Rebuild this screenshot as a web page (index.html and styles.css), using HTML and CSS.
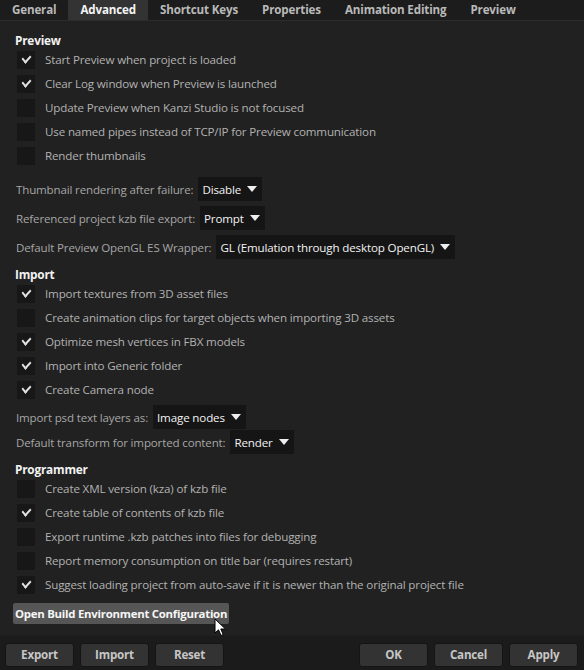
FILE: index.html
```html
<!DOCTYPE html>
<html>
<head>
<meta charset="utf-8">
<link rel="stylesheet" href="styles.css">
</head>
<body>
<div class="win">
  <div class="tabs">
    <div class="tab">General</div>
    <div class="tab active">Advanced</div>
    <div class="tab">Shortcut Keys</div>
    <div class="tab">Properties</div>
    <div class="tab">Animation Editing</div>
    <div class="tab">Preview</div>
  </div>
  <div class="content">
    <div class="head h-preview">Preview</div>
    <div class="check on"><span class="box"></span>Start Preview when project is loaded</div>
    <div class="check on"><span class="box"></span>Clear Log window when Preview is launched</div>
    <div class="check"><span class="box"></span>Update Preview when Kanzi Studio is not focused</div>
    <div class="check"><span class="box"></span>Use named pipes instead of TCP/IP for Preview communication</div>
    <div class="check"><span class="box"></span>Render thumbnails</div>

    <div class="drops g1">
      <div class="drow"><span class="lbl">Thumbnail rendering after failure:</span><span class="drop">Disable<span class="tri"></span></span></div>
      <div class="drow"><span class="lbl">Referenced project kzb file export:</span><span class="drop">Prompt<span class="tri"></span></span></div>
      <div class="drow"><span class="lbl">Default Preview OpenGL ES Wrapper:</span><span class="drop">GL (Emulation through desktop OpenGL)<span class="tri"></span></span></div>
    </div>

    <div class="head h-import">Import</div>
    <div class="check on"><span class="box"></span>Import textures from 3D asset files</div>
    <div class="check"><span class="box"></span>Create animation clips for target objects when importing 3D assets</div>
    <div class="check on"><span class="box"></span>Optimize mesh vertices in FBX models</div>
    <div class="check on"><span class="box"></span>Import into Generic folder</div>
    <div class="check on"><span class="box"></span>Create Camera node</div>

    <div class="drops g2">
      <div class="drow"><span class="lbl">Import psd text layers as:</span><span class="drop">Image nodes<span class="tri"></span></span></div>
      <div class="drow"><span class="lbl">Default transform for imported content:</span><span class="drop">Render<span class="tri"></span></span></div>
    </div>

    <div class="head h-prog">Programmer</div>
    <div class="check"><span class="box"></span>Create XML version (kza) of kzb file</div>
    <div class="check on"><span class="box"></span>Create table of contents of kzb file</div>
    <div class="check"><span class="box"></span>Export runtime .kzb patches into files for debugging</div>
    <div class="check"><span class="box"></span>Report memory consumption on title bar (requires restart)</div>
    <div class="check on"><span class="box"></span>Suggest loading project from auto-save if it is newer than the original project file</div>

    <div class="bigbtn-wrap"><span class="bigbtn">Open Build Environment Configuration</span></div>
  </div>
  <div class="footer">
    <div class="grp">
      <div class="btn">Export</div>
      <div class="btn">Import</div>
      <div class="btn">Reset</div>
    </div>
    <div class="grp">
      <div class="btn">OK</div>
      <div class="btn">Cancel</div>
      <div class="btn">Apply</div>
    </div>
  </div>
  <svg class="cursor" width="14" height="20" viewBox="0 0 14 20"><path d="M1 1 L1 15 L4.5 11.8 L7 17.5 L9.2 16.5 L6.8 11 L11.5 11 Z" fill="#fff" stroke="#000" stroke-width="1"/></svg>
</div>
</body>
</html>
```
FILE: styles.css
```css
html, body { margin: 0; padding: 0; }
body { background: #212121; font-family: "Open Sans", "Noto Sans", sans-serif; }
.win { position: relative; width: 584px; height: 670px; overflow: hidden; background: #212121; display: flex; flex-direction: column; }

.tabs { background: #1c1c1c; border-bottom: 1px solid #2c2c2c; display: flex; box-sizing: border-box; height: 21px; }
.tab { height: 20px; line-height: 20px; font-size: 11.6px; font-weight: 700; color: #b9b9b9; padding: 0 12px; letter-spacing: -0.15px; }
.tab.active { background: #333333; color: #f4f4f4; }

.content { flex: 1; padding-left: 15px; display: flex; flex-direction: column; align-items: flex-start; }
.head { height: 18px; line-height: 21px; font-size: 11.8px; font-weight: 700; color: #f2f2f2; letter-spacing: -0.2px; }
.h-preview { margin-top: 9px; }
.h-import { margin-top: 5px; }
.h-prog { margin-top: 5px; }

.check { height: 24px; line-height: 22px; display: flex; align-items: center; font-size: 11.6px; color: #b2b2b2; letter-spacing: -0.15px; }
.box { width: 18px; height: 18px; background: #171717; margin-left: 2px; margin-right: 10px; position: relative; flex: none; }
.check.on .box::after { content: ""; position: absolute; left: 4.5px; top: 4px; width: 7px; height: 4px; border-left: 2px solid #e2e2e2; border-bottom: 2px solid #e2e2e2; transform: rotate(-48deg) skewX(-8deg); transform-origin: center; }

.drops { display: flex; flex-direction: column; }
.g1 { margin-top: 9px; gap: 5px; }
.g2 { margin-top: 3px; gap: 1px; }
.drow { height: 24px; display: flex; align-items: center; }
.lbl { font-size: 11.55px; color: #a6a6a6; margin-left: 1px; margin-right: 5px; letter-spacing: -0.15px; }
.drop { height: 24px; display: flex; align-items: center; background: #151515; color: #f2f2f2; font-size: 11.6px; padding: 0 5px 0 4px; letter-spacing: -0.15px; }
.tri { width: 0; height: 0; border-left: 5px solid transparent; border-right: 5px solid transparent; border-top: 6px solid #eeeeee; margin-left: 6px; }

.bigbtn-wrap { margin-top: 4px; margin-left: -2px; }
.bigbtn { display: inline-block; height: 21px; line-height: 21px; background: #565656; color: #f6f6f6; font-size: 11.4px; font-weight: 700; padding: 0 2px; border-radius: 2px; letter-spacing: -0.25px; }

.footer { height: 35px; background: #1b1b1b; display: flex; justify-content: space-between; align-items: flex-start; padding: 7px 6px 0 5px; box-sizing: border-box; border-top: 1px solid #1f1f1f; }
.grp { display: flex; gap: 6px; }
.btn { width: 67px; height: 22px; line-height: 22px; text-align: center; background: #333333; border: 1px solid #141414; border-radius: 3px; color: #c6c6c6; font-size: 11.6px; font-weight: 700; letter-spacing: -0.2px; }

.cursor { position: absolute; left: 214px; top: 618px; }
```
